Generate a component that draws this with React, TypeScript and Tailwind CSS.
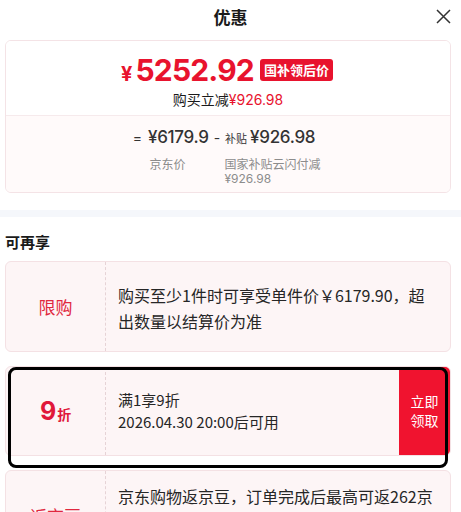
import React from "react";

const cjk = { fontFamily: '"Noto Sans CJK SC", "Noto Sans", sans-serif' };
const num = { fontFamily: 'Inter, "Noto Sans CJK SC", sans-serif' };

export default function App() {
  return (
    <div className="w-[461px] h-[512px] overflow-hidden bg-white relative" style={cjk}>
      {/* header */}
      <div className="h-8 relative flex items-center justify-center">
        <span className="text-[17px] font-bold text-[#1a1a1a] leading-none">优惠</span>
        <svg className="absolute right-[10px] top-[9px]" width="15" height="15" viewBox="0 0 15 15">
          <path d="M1 1L14 14M14 1L1 14" stroke="#333" strokeWidth="1.5" fill="none" />
        </svg>
      </div>

      {/* top card */}
      <div className="mx-[5px] mt-2 w-[446px] rounded-[6px] border border-[#f4e3e6] overflow-hidden">
        <div className="h-[74px] bg-white flex flex-col items-center pt-[14px]">
          <div className="flex items-center gap-[6px] ml-[-2px]">
            <div className="flex items-baseline text-[#e8132e] font-bold" style={num}>
              <span className="text-[20px] leading-none mr-[3px]">¥</span>
              <span className="text-[30px] leading-[30px] tracking-[-0.8px]">5252.92</span>
            </div>
            <span className="bg-[#e8132e] text-white text-[13px] font-bold px-[4px] h-[22px] leading-[22px] rounded-[3px]">国补领后价</span>
          </div>
          <div className="mt-[5px] text-[14px] leading-[18px] text-[#1a1a1a]">
            购买立减<span className="text-[#e8132e]" style={num}>¥926.98</span>
          </div>
        </div>
        <div className="h-[77px] bg-[#fffafa] border-t border-[#f6eaec] flex flex-col items-center pt-[9px]">
          <div className="flex items-center text-[#333] ml-[-8px]" style={num}>
            <span className="text-[14px] mr-[6px]">=</span>
            <span className="text-[17px] font-medium tracking-[-0.3px]">¥6179.9</span>
            <span className="text-[14px] mx-[5px]">-</span>
            <span className="text-[11px] mr-[3px]" style={cjk}>补贴</span>
            <span className="text-[17px] font-medium tracking-[-0.3px]">¥926.98</span>
          </div>
          <div className="flex text-[12px] leading-[15px] text-[#8c8c8c] mt-[5px] ml-[14px]">
            <div className="w-[75px]">京东价</div>
            <div>
              <div>国家补贴云闪付减</div>
              <div style={num}>¥926.98</div>
            </div>
          </div>
        </div>
      </div>

      <div className="h-[7px] bg-[#f5f7fb] mt-[17px]" />

      <div className="px-[5px] pt-[16px] text-[15px] font-bold text-[#1a1a1a] leading-[18px]">可再享</div>

      {/* card 1 */}
      <div className="mx-[5px] mt-[10px] w-[446px] h-[91px] rounded-[6px] border border-[#f4e1e4] bg-[#fdf5f6] flex">
        <div className="w-[100px] flex items-center justify-center border-r border-dashed border-[#e6d3d6] text-[17px] text-[#e0283f]">限购</div>
        <div className="flex-1 flex items-center pl-[12px] pr-[14px] pt-[2px] text-[16px] leading-[26px] text-[#262626]">
          购买至少1件时可享受单件价￥6179.90，超出数量以结算价为准
        </div>
      </div>

      {/* card 2 */}
      <div className="relative mx-[5px] mt-[14px] w-[446px] h-[90px] rounded-[6px] border border-[#f4e1e4] bg-[#fdf5f6] flex overflow-hidden">
        <div className="w-[100px] flex items-center justify-center border-r border-dashed border-[#e6d3d6] text-[#e0183a] font-bold">
          <span className="text-[25px] leading-none" style={num}>9</span>
          <span className="text-[14px] leading-none mt-[6px] ml-[1px]">折</span>
        </div>
        <div className="flex-1 flex flex-col justify-center pl-[12px] text-[15px] leading-[22px] text-[#262626]">
          <div>满1享9折</div>
          <div>2026.04.30 20:00后可用</div>
        </div>
        <div className="w-[51px] bg-[#f0132f] flex items-center justify-center text-white text-[14px] leading-[19px] text-center">
          <div>立即<br />领取</div>
        </div>
      </div>

      {/* card 3 */}
      <div className="mx-[5px] mt-[14px] w-[446px] h-[91px] rounded-[6px] border border-[#f4e1e4] bg-[#fdf5f6] flex">
        <div className="w-[100px] flex items-center justify-center border-r border-dashed border-[#e6d3d6] text-[17px] text-[#e0283f]">返京豆</div>
        <div className="flex-1 pl-[12px] pr-[12px] pt-[12px] text-[16px] leading-[26px] text-[#262626]">
          京东购物返京豆，订单完成后最高可返262京豆，特殊渠道订单不参与购物返豆，以订单实际结算为准
        </div>
      </div>

      {/* selection outline */}
      <div className="absolute left-[8px] top-[367px] w-[440px] h-[101px] rounded-[8px] border-[3px] border-black pointer-events-none" />
    </div>
  );
}
